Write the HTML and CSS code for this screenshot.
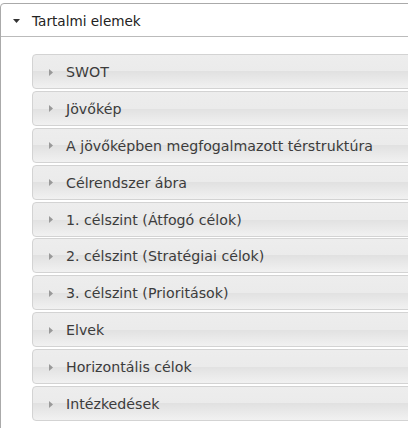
FILE: index.html
```html
<!DOCTYPE html>
<html lang="hu">
<head>
  <meta charset="UTF-8" />
  <meta name="viewport" content="width=device-width, initial-scale=1" />
  <title>Tartalmi elemek</title>
  <link rel="stylesheet" href="styles.css">
</head>
<body>

  <div class="panel">
    <div class="panel-header">
      <svg class="caret-down" width="7" height="4" viewBox="0 0 7 4"><polygon points="0,0 7,0 3.5,4" fill="#333"/></svg>
      <span>Tartalmi elemek</span>
    </div>

    <div class="panel-body">
      <div class="item"><svg class="caret" width="4" height="7" viewBox="0 0 4 7"><polygon points="0,0 4,3.5 0,7" fill="#999"/></svg>SWOT</div>
      <div class="item"><svg class="caret" width="4" height="7" viewBox="0 0 4 7"><polygon points="0,0 4,3.5 0,7" fill="#999"/></svg>Jövőkép</div>
      <div class="item"><svg class="caret" width="4" height="7" viewBox="0 0 4 7"><polygon points="0,0 4,3.5 0,7" fill="#999"/></svg>A jövőképben megfogalmazott térstruktúra</div>
      <div class="item"><svg class="caret" width="4" height="7" viewBox="0 0 4 7"><polygon points="0,0 4,3.5 0,7" fill="#999"/></svg>Célrendszer ábra</div>
      <div class="item"><svg class="caret" width="4" height="7" viewBox="0 0 4 7"><polygon points="0,0 4,3.5 0,7" fill="#999"/></svg>1. célszint (Átfogó célok)</div>
      <div class="item"><svg class="caret" width="4" height="7" viewBox="0 0 4 7"><polygon points="0,0 4,3.5 0,7" fill="#999"/></svg>2. célszint (Stratégiai célok)</div>
      <div class="item"><svg class="caret" width="4" height="7" viewBox="0 0 4 7"><polygon points="0,0 4,3.5 0,7" fill="#999"/></svg>3. célszint (Prioritások)</div>
      <div class="item"><svg class="caret" width="4" height="7" viewBox="0 0 4 7"><polygon points="0,0 4,3.5 0,7" fill="#999"/></svg>Elvek</div>
      <div class="item"><svg class="caret" width="4" height="7" viewBox="0 0 4 7"><polygon points="0,0 4,3.5 0,7" fill="#999"/></svg>Horizontális célok</div>
      <div class="item"><svg class="caret" width="4" height="7" viewBox="0 0 4 7"><polygon points="0,0 4,3.5 0,7" fill="#999"/></svg>Intézkedések</div>
    </div>
  </div>

</body>
</html>
```

FILE: styles.css
```css
/* Collapsible content list */
body {
  margin: 0;
  padding-top: 3px;
  font-family: 'DejaVu Sans', Verdana, sans-serif;
  font-size: 14.2px;
  background: white;
  overflow: hidden;
}

.panel {
  width: 460px;
  border: 1px solid #aaa;
  border-radius: 4px;
  background: white;
}

.panel-header {
  display: flex;
  align-items: center;
  box-sizing: border-box;
  height: 33px;
  padding: 1px 0 0 12px;
  border-bottom: 1px solid #bbb;
  color: #222;
  font-size: 13.6px;
}

.caret-down {
  margin-right: 12px;
}

.panel-body {
  padding: 17px 0 40px 31px;
}

/* Glassy gradient rows */
.item {
  display: flex;
  align-items: center;
  box-sizing: border-box;
  height: 35px;
  margin-bottom: 1.9px;
  padding: 1px 0 0 16px;
  border: 1px solid #d3d3d3;
  border-radius: 4px;
  color: #3c3c3c;
  background: linear-gradient(#ededed 0%, #ebebeb 50%, #e1e1e1 50%, #f1f1f1 100%);
}

.item .caret {
  margin-right: 13px;
}
```
